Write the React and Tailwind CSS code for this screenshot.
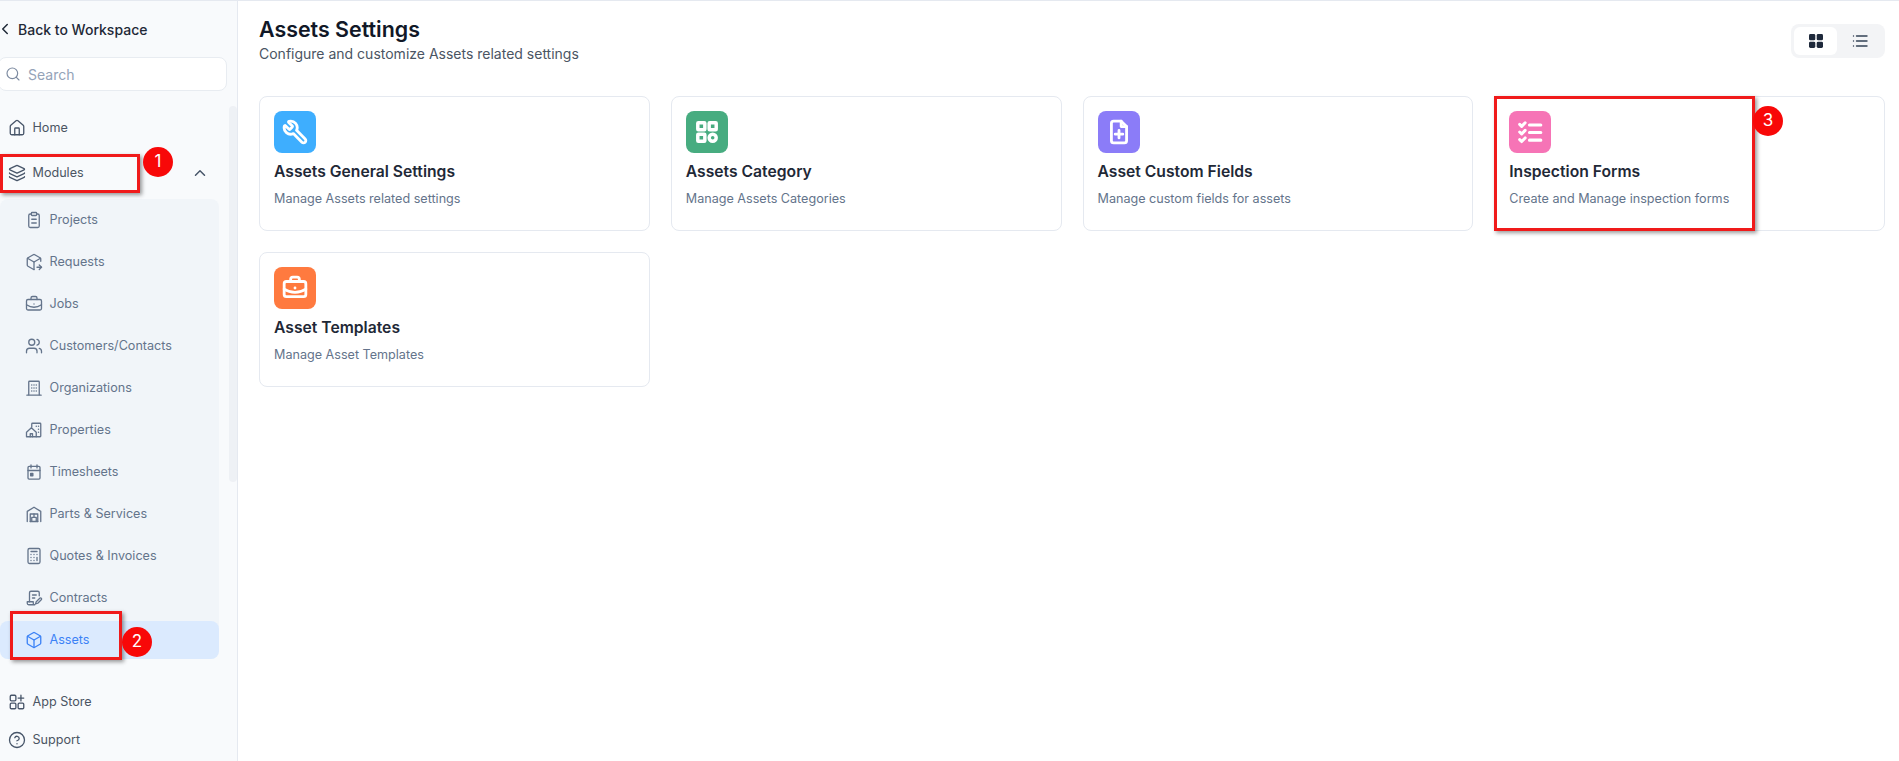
import React from 'react';
import {
  ChevronLeft, ChevronUp, Search, House, Layers, BriefcaseBusiness, Users, Calculator, Box, CircleHelp, Wrench,
} from 'lucide-react';

const font = { fontFamily: 'Inter, "Noto Sans", sans-serif' };

const Svg = ({ strokeWidth = 1.75, children, ...props }) => (
  <svg viewBox="0 0 24 24" fill="none" stroke="currentColor" strokeWidth={strokeWidth} strokeLinecap="round" strokeLinejoin="round" {...props}>
    {children}
  </svg>
);

const ProjectsIcon = (props) => (
  <Svg {...props}>
    <rect x="8.5" y="2" width="7" height="4" rx="1" />
    <path d="M15.5 4H17a2 2 0 0 1 2 2v14a2 2 0 0 1-2 2H7a2 2 0 0 1-2-2V6a2 2 0 0 1 2-2h1.5" />
    <path d="M9 11h6M9 16h6" />
  </Svg>
);

const RequestsIcon = (props) => (
  <Svg {...props}>
    <path d="M21 11V8a2 2 0 0 0-1-1.73l-7-4a2 2 0 0 0-2 0l-7 4A2 2 0 0 0 3 8v8a2 2 0 0 0 1 1.73l7 4a2 2 0 0 0 1 .27" />
    <path d="M3.3 7 12 12l8.7-5" />
    <path d="M12 22V12" />
    <path d="M16 19h6" />
    <path d="m19 16 3 3-3 3" />
  </Svg>
);

const OrganizationsIcon = (props) => (
  <Svg {...props}>
    <path d="M5 21V4a1 1 0 0 1 1-1h12a1 1 0 0 1 1 1v17" />
    <path d="M2.5 21.5h19" />
    <path d="M9 8h.01M12 8h.01M15 8h.01M9 12h.01M12 12h.01M15 12h.01M9 16h.01M12 16h.01M15 16h.01" strokeWidth="2" />
  </Svg>
);

const PropertiesIcon = (props) => (
  <Svg {...props}>
    <path d="M9 8V4a1 1 0 0 1 1-1h10a1 1 0 0 1 1 1v16a1 1 0 0 1-1 1h-5" />
    <path d="M2 15l6.5-6 6.5 6v6H2z" />
    <path d="M7 21v-4h3v4" />
    <path d="M15 7h.01M18 7h.01M18 11h.01M18 15h.01" strokeWidth="2" />
  </Svg>
);

const TimesheetsIcon = (props) => (
  <Svg {...props}>
    <rect x="4" y="4.5" width="16" height="17" rx="1.5" />
    <path d="M8 2.5v4M16 2.5v4M4 10h16" />
    <rect x="7.5" y="14" width="3" height="3" fill="currentColor" />
  </Svg>
);

const PartsIcon = (props) => (
  <Svg {...props}>
    <path d="M3 22V8.5L12 3l9 5.5V22" />
    <path d="M7 22V12h10v10" />
    <path d="M7 22h10M12 12v4M9 16.5h6V22H9z" />
  </Svg>
);

const ContractsIcon = (props) => (
  <Svg {...props}>
    <path d="M19 9V5a2 2 0 0 0-2-2H8a2 2 0 0 0-2 2v12" />
    <path d="M10 8h5M10 12h3" />
    <path d="M3 17h8v2a2 2 0 0 0 2 2H5a2 2 0 0 1-2-2z" />
    <path d="m14 20 1-3 5-5a1.5 1.5 0 0 1 2 2l-5 5z" />
  </Svg>
);

const AppStoreIcon = (props) => (
  <Svg {...props}>
    <rect x="3" y="3" width="7.5" height="7.5" rx="1.5" />
    <rect x="3" y="13.5" width="7.5" height="7.5" rx="1.5" />
    <rect x="13.5" y="13.5" width="7.5" height="7.5" rx="1.5" />
    <path d="M17.25 3v7.5M13.5 6.75H21" />
  </Svg>
);

const CategoryIcon = (props) => (
  <Svg {...props} strokeWidth={3.2}>
    <rect x="3.5" y="3.5" width="6.5" height="6.5" rx="0.5" />
    <rect x="14" y="3.5" width="6.5" height="6.5" rx="0.5" />
    <rect x="3.5" y="14" width="6.5" height="6.5" rx="0.5" />
    <circle cx="17.25" cy="17.25" r="3.25" />
  </Svg>
);

const CustomFieldsIcon = (props) => (
  <Svg {...props} strokeWidth={2.6}>
    <path d="M14 2H7a2 2 0 0 0-2 2v16a2 2 0 0 0 2 2h10a2 2 0 0 0 2-2V7z" />
    <path d="M14 2v5h5" />
    <path d="M12 10.5v7M8.5 14h7" />
  </Svg>
);

const ChecklistIcon = (props) => (
  <Svg {...props} strokeWidth={2.8}>
    <path d="M2.5 5l1.8 1.8L7.5 3.5" />
    <path d="M2.5 12l1.8 1.8L7.5 10.5" />
    <path d="M2.5 19l1.8 1.8L7.5 17.5" />
    <path d="M11.5 5.5H22M11.5 12.5H22M11.5 19.5H22" />
  </Svg>
);

const MirroredWrench = ({ className, ...props }) => <Wrench className={`-scale-x-100 ${className}`} {...props} />;

const GridFilled = (props) => (
  <svg viewBox="0 0 16 16" fill="currentColor" {...props}>
    <rect x="1" y="1" width="6.3" height="6.3" rx="1.4" />
    <rect x="8.7" y="1" width="6.3" height="6.3" rx="1.4" />
    <rect x="1" y="8.7" width="6.3" height="6.3" rx="1.4" />
    <rect x="8.7" y="8.7" width="6.3" height="6.3" rx="1.4" />
  </svg>
);

const subItems = [
  ['Projects', ProjectsIcon],
  ['Requests', RequestsIcon],
  ['Jobs', BriefcaseBusiness],
  ['Customers/Contacts', Users],
  ['Organizations', OrganizationsIcon],
  ['Properties', PropertiesIcon],
  ['Timesheets', TimesheetsIcon],
  ['Parts & Services', PartsIcon],
  ['Quotes & Invoices', Calculator],
  ['Contracts', ContractsIcon],
];

const cards = [
  { title: 'Assets General Settings', desc: 'Manage Assets related settings', color: 'bg-[#3eaefe]', Icon: MirroredWrench },
  { title: 'Assets Category', desc: 'Manage Assets Categories', color: 'bg-[#47ac80]', Icon: CategoryIcon },
  { title: 'Asset Custom Fields', desc: 'Manage custom fields for assets', color: 'bg-[#8b7cf8]', Icon: CustomFieldsIcon },
  { title: 'Inspection Forms', desc: 'Create and Manage inspection forms', color: 'bg-[#f674b6]', Icon: ChecklistIcon },
  { title: 'Asset Templates', desc: 'Manage Asset Templates', color: 'bg-[#ff7a3f]', Icon: BriefcaseBusiness },
];

const NavRow = ({ icon: Icon, label, className = '' }) => (
  <div className={`flex items-center gap-[6.5px] pl-[8px] text-[12.6px] text-[#4b5563] ${className}`}>
    <Icon className="w-[18px] h-[18px] text-[#475569]" strokeWidth={1.75} />
    <span>{label}</span>
  </div>
);

const Callout = ({ n, className }) => (
  <div className={`absolute z-10 w-[30px] h-[30px] rounded-full bg-[#f80808] text-white text-[17px] flex items-center justify-center ${className}`}>
    {n}
  </div>
);

const RedBox = ({ className }) => (
  <div className={`absolute z-10 border-[3px] border-[#f01a1a] shadow-[2px_2px_4px_rgba(0,0,0,0.4)] ${className}`} />
);

const Card = ({ title, desc, color, Icon }) => (
  <div className="h-[135px] rounded-[8px] border border-[#e5e9f0] bg-white pt-[14px] pl-[14px]">
    <div className={`w-[42px] h-[42px] rounded-[8px] flex items-center justify-center text-white ${color}`}>
      <Icon className="w-[26px] h-[26px]" strokeWidth={2.6} />
    </div>
    <div className="mt-[7px] text-[15.7px] leading-[24px] font-semibold text-[#1f2937]">{title}</div>
    <div className="mt-[5px] text-[12.6px] leading-[20px] text-[#64748b]">{desc}</div>
  </div>
);

export default function App() {
  return (
    <div style={font} className="relative flex h-[761px] w-[1899px] overflow-hidden bg-white border-t border-[#e5e9f0]">
      <aside className="w-[238px] shrink-0 bg-[#f8fafc] border-r border-[#e5e9f0] flex flex-col">
        <div className="h-[56px] shrink-0 flex items-center gap-[4px] text-[14px] font-medium text-[#1f2937]">
          <ChevronLeft className="w-[18px] h-[18px] ml-[-4px]" strokeWidth={2} />
          <span>Back to Workspace</span>
        </div>
        <div className="h-[34px] w-[229px] ml-[-2px] shrink-0 rounded-[8px] bg-white border border-[#e8ecf1] flex items-center gap-[7px] pl-[6px] text-[14px] text-[#94a3b8]">
          <Search className="w-[16px] h-[16px] text-[#7c8aa0]" strokeWidth={1.75} />
          <span>Search</span>
        </div>
        <div className="flex flex-1">
          <div className="w-[219px] shrink-0">
            <NavRow icon={House} label="Home" className="h-[38px] mt-[18px]" />
            <div className="flex items-center h-[38px] mt-[7px] justify-between">
              <NavRow icon={Layers} label="Modules" />
              <ChevronUp className="w-[18px] h-[18px] mr-[10px] text-[#475569]" strokeWidth={2} />
            </div>
            <div className="mt-[8px] bg-[#f1f5f9] rounded-[8px]">
              <div className="mt-[-1px] pb-[2px]">
                {subItems.map(([label, Icon]) => (
                  <div key={label} className="h-[42px] flex items-center gap-[6.5px] pl-[25px] text-[12.6px] text-[#64748b]">
                    <Icon className="w-[18px] h-[18px] text-[#64748b]" strokeWidth={1.75} />
                    <span>{label}</span>
                  </div>
                ))}
              </div>
              <div className="h-[38px] rounded-[8px] bg-[#dbeafe] flex items-center gap-[6.5px] pl-[25px] text-[12.6px] text-[#3b82f6]">
                <Box className="w-[18px] h-[18px]" strokeWidth={1.75} />
                <span>Assets</span>
              </div>
            </div>
            <NavRow icon={AppStoreIcon} label="App Store" className="h-[38px] mt-[24px]" />
            <NavRow icon={CircleHelp} label="Support" className="h-[38px]" />
          </div>
          <div className="w-[8px] ml-[10px] h-[376px] mt-[15px] rounded-[4px] bg-[#eef1f5]" />
        </div>
      </aside>

      <main className="flex-1 pl-[21px] pr-[14px] pt-[14px]">
        <div className="flex items-start justify-between">
          <div>
            <h1 className="text-[21.4px] leading-[29px] font-semibold text-[#111827]">Assets Settings</h1>
            <p className="text-[14px] leading-[20px] text-[#4b5563]">Configure and customize Assets related settings</p>
          </div>
          <div className="mt-[9px] h-[34px] w-[94px] rounded-[8px] bg-[#f3f4f6] flex items-center p-[3px]">
            <div className="h-[28px] w-[43px] rounded-[6px] bg-white flex items-center justify-center text-[#1e293b]">
              <GridFilled className="w-[16px] h-[16px]" />
            </div>
            <div className="flex-1 flex items-center justify-center text-[#334155]">
              <svg viewBox="0 0 16 16" className="w-[16px] h-[16px]" fill="none" stroke="currentColor" strokeWidth="1.4" strokeLinecap="round">
                <path d="M1.5 3h.01M1.5 8h.01M1.5 13h.01M4.5 3H15M4.5 8H15M4.5 13H15" />
              </svg>
            </div>
          </div>
        </div>
        <div className="mt-[32px] grid grid-cols-4 gap-x-[21px] gap-y-[21px]">
          {cards.map((c) => <Card key={c.title} {...c} />)}
        </div>
      </main>

      <RedBox className="left-[0px] top-[153px] w-[140px] h-[39px]" />
      <Callout n="1" className="left-[143px] top-[146px]" />
      <RedBox className="left-[10px] top-[610px] w-[112px] h-[49px]" />
      <Callout n="2" className="left-[122px] top-[626px]" />
      <RedBox className="left-[1494px] top-[95px] w-[261px] h-[135px]" />
      <Callout n="3" className="left-[1753px] top-[105px]" />
    </div>
  );
}
